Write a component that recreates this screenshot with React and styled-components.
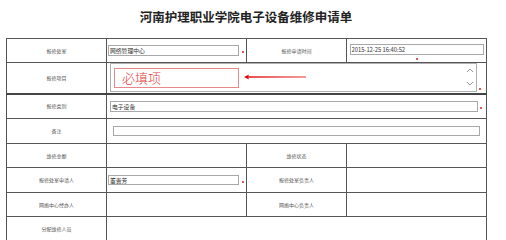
import React from 'react';
import styled, { createGlobalStyle } from 'styled-components';

const Global = createGlobalStyle`
  html, body { margin: 0; padding: 0; background: #fff; }
  body {
    font-family: "Noto Sans CJK SC", "Noto Sans", sans-serif;
    width: 506px;
    height: 240px;
    overflow: hidden;
  }
`;

const Page = styled.div`
  padding-left: 6px;
  width: 480px;
`;

const Title = styled.h1`
  margin: 0;
  padding: 7px 0 11px;
  line-height: 20px;
  font-size: 12.5px;
  font-weight: 700;
  color: #222;
  text-align: center;
`;

const Table = styled.table`
  width: 480px;
  border-collapse: collapse;
  table-layout: fixed;
`;

const Row = styled.tr`
  height: ${(p) => p.$h}px;
`;

const Label = styled.td`
  border: 1px solid #555;
  ${(p) => (p.$thick ? 'border-bottom: 2px solid #444;' : '')}
  padding: 0;
  text-align: center;
  vertical-align: middle;
  font-size: 5px;
  line-height: 6px;
  color: #555;
`;

const Cell = styled.td`
  border: 1px solid #555;
  ${(p) => (p.$thick ? 'border-bottom: 2px solid #444;' : '')}
  padding: 0 0 0 ${(p) => p.$pl || 0}px;
  vertical-align: middle;
  text-align: ${(p) => (p.$center ? 'center' : 'left')};
  position: relative;
`;

const Field = styled.div`
  display: flex;
  align-items: ${(p) => (p.$bottom ? 'flex-end' : 'center')};
  gap: 2px;
`;

const TextInput = styled.input`
  box-sizing: border-box;
  width: ${(p) => p.$w}px;
  height: ${(p) => p.$h || 11}px;
  border: 1px solid #a8a8a8;
  padding: 0 1px;
  margin: 0;
  font-family: "Noto Sans CJK SC", sans-serif;
  font-size: 5.8px;
  color: #333;
  background: #fff;
  outline: none;
`;

const TextArea = styled.textarea`
  box-sizing: border-box;
  display: block;
  width: 367px;
  height: 29px;
  border: 1px solid #b0b0b0;
  margin: 0;
  padding: 0;
  resize: none;
  overflow: hidden;
  background: #fff;
  outline: none;
`;

const AreaWrap = styled.div`
  position: relative;
`;

const ScrollArrows = styled.svg`
  position: absolute;
  right: 3px;
  top: 4px;
`;

const Star = styled.span`
  display: ${(p) => (p.$block ? 'block' : 'inline-block')};
  width: 2px;
  height: 2px;
  background: #d42020;
  border-radius: 1px;
  margin: ${(p) => p.$m || '0'};
  font-size: 0;
`;

const DateBox = styled.div`
  display: flex;
  flex-direction: column;
  align-items: center;
  gap: 3px;
  padding-top: 3px;
  height: 100%;
  box-sizing: border-box;
`;

const Note = styled.div`
  position: absolute;
  left: 7px;
  top: 5px;
  width: 125px;
  height: 20px;
  box-sizing: border-box;
  border: 1px solid #e98a8a;
  color: #e23a3a;
  font-size: 13px;
  line-height: 18px;
  padding-left: 7px;
  font-weight: 300;
  background: rgba(255,255,255,0.6);
`;

const Arrow = styled.svg`
  position: absolute;
  left: 137px;
  top: 11px;
`;

export default function App() {
  return (
    <>
      <Global />
      <Page>
        <Title>河南护理职业学院电子设备维修申请单</Title>
        <Table>
          <colgroup>
            <col style={{ width: 100 }} />
            <col style={{ width: 140 }} />
            <col style={{ width: 100 }} />
            <col style={{ width: 140 }} />
          </colgroup>
          <tbody>
            <Row $h={24}>
              <Label>报修处室</Label>
              <Cell $pl={1}>
                <Field>
                  <TextInput $w={131} defaultValue="网络管理中心" />
                  <Star $m="3px 0 0 1px" />
                </Field>
              </Cell>
              <Label>报修申请时间</Label>
              <Cell $center>
                <DateBox>
                  <TextInput $w={134} $h={11} defaultValue="2015-12-25 16:40:52" />
                  <Star $block />
                </DateBox>
              </Cell>
            </Row>
            <Row $h={31}>
              <Label $thick>报修项目</Label>
              <Cell colSpan={3} $pl={3} $thick>
                <Field $bottom>
                  <AreaWrap>
                    <TextArea />
                    <ScrollArrows width="8" height="20" viewBox="0 0 8 20">
                      <path d="M1 5 L4 2 L7 5" fill="none" stroke="#999" strokeWidth="1" />
                      <path d="M1 15 L4 18 L7 15" fill="none" stroke="#999" strokeWidth="1" />
                    </ScrollArrows>
                  </AreaWrap>
                  <Star $m="0 0 2px 0" />
                </Field>
                <Note>必填项</Note>
                <Arrow width="62" height="6" viewBox="0 0 62 6">
                  <defs>
                    <linearGradient id="ag" x1="0" x2="1" y1="0" y2="0">
                      <stop offset="0" stopColor="#e00000" />
                      <stop offset="1" stopColor="#f07070" />
                    </linearGradient>
                  </defs>
                  <rect x="3" y="2.3" width="59" height="1.4" fill="url(#ag)" />
                  <path d="M0 3 L5 0.5 L4 3 L5 5.5 Z" fill="#e00000" />
                </Arrow>
              </Cell>
            </Row>
            <Row $h={25}>
              <Label>报修类别</Label>
              <Cell colSpan={3} $pl={3}>
                <Field>
                  <TextInput $w={368} defaultValue="电子设备" />
                  <Star $m="3px 0 0 0" />
                </Field>
              </Cell>
            </Row>
            <Row $h={25}>
              <Label>备注</Label>
              <Cell colSpan={3} $pl={6}>
                <Field>
                  <TextInput $w={367} $h={10} defaultValue="" />
                </Field>
              </Cell>
            </Row>
            <Row $h={24}>
              <Label>维修金额</Label>
              <Cell />
              <Label>维修状态</Label>
              <Cell />
            </Row>
            <Row $h={25}>
              <Label>报修处室申请人</Label>
              <Cell $pl={1}>
                <Field>
                  <TextInput $w={131} $h={10} defaultValue="董贵芳" />
                  <Star $m="3px 0 0 1px" />
                </Field>
              </Cell>
              <Label>报修处室负责人</Label>
              <Cell />
            </Row>
            <Row $h={24}>
              <Label>网络中心经办人</Label>
              <Cell />
              <Label>网络中心负责人</Label>
              <Cell />
            </Row>
            <Row $h={25}>
              <Label>分配维修人员</Label>
              <Cell colSpan={3} />
            </Row>
          </tbody>
        </Table>
      </Page>
    </>
  );
}
